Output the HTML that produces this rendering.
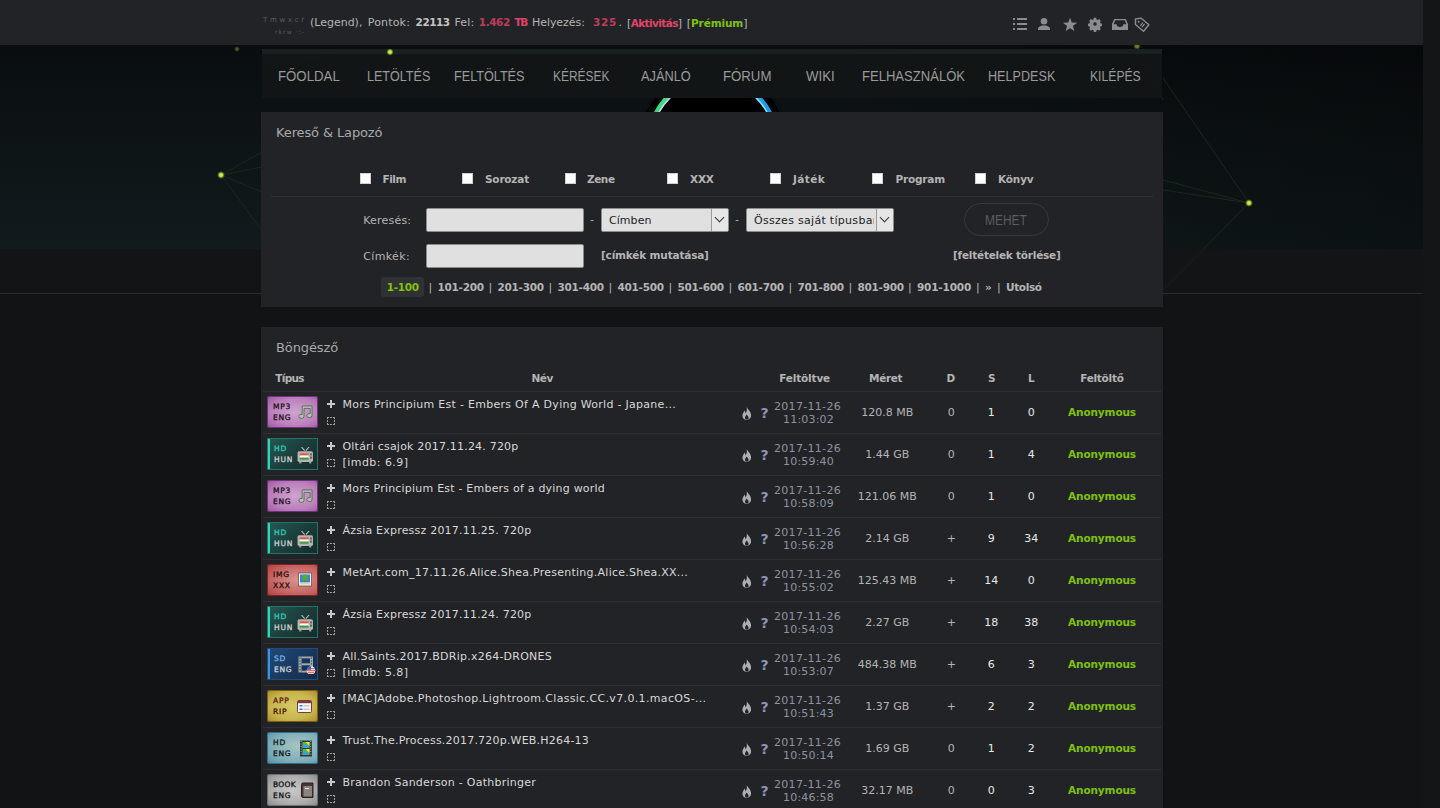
<!DOCTYPE html>
<html lang="hu">
<head>
<meta charset="utf-8">
<title>Böngésző</title>
<style>
*{box-sizing:border-box;margin:0;padding:0}
html,body{width:1440px;height:808px;overflow:hidden;background:#121315;}
body{position:relative;font-family:"DejaVu Sans","Liberation Sans",sans-serif;font-size:11px;color:#b4b4b4;}
.t{position:absolute;white-space:nowrap;display:block}
#scroll{position:absolute;left:1423px;top:0;width:17px;height:808px;background:#141516;z-index:50}
#topbar{position:absolute;left:0;top:0;width:1423px;height:45px;background:#222326}
#hero{position:absolute;left:0;top:45px;width:1423px;height:204px;background:linear-gradient(90deg,rgba(0,0,0,0) 55%,rgba(0,0,0,.32) 100%),linear-gradient(180deg,#090d0f 0%,#0d1315 40%,#111a1d 100%);overflow:hidden}
#strip{position:absolute;left:0;top:249px;width:1423px;height:45px;background:#121415;border-bottom:1px solid #292b2d}
#menu{position:absolute;left:262px;top:49px;width:900px;height:49px;background:rgba(19,22,23,.95);border-top:5px solid rgba(25,33,34,.95)}
.m{font-family:"Liberation Sans",sans-serif;font-size:14px;color:#9a9a9a}
.panel{position:absolute;left:261px;width:902px;background:#222326}
.pt{font-size:13px;color:#a9a9a9}
b,.b{font-weight:bold;font-size:10.5px}
.pk{color:#e2436b}.gr{color:#7fc20b}
.w{color:#e8e8e8}
.hl{position:absolute;height:1px;background:#2f3033}
.cb{position:absolute;width:11px;height:11px;background:#fff;border:1px solid #cfcfcf}
.in{position:absolute;height:24px;background:#e0e0e0;border:1px solid #8b8b8b;border-radius:2px}
.sel{position:absolute;height:24px;background:#e0e0e0;border:1px solid #8b8b8b;border-radius:2px;color:#222;overflow:hidden}
.sel i{position:absolute;right:0;top:0;width:17px;height:22px;border-left:1px solid #9a9a9a;background:#e6e6e6}
.sel i:after{content:"";position:absolute;left:4px;top:5px;width:6px;height:6px;border-right:1.3px solid #333;border-bottom:1.3px solid #333;transform:rotate(45deg)}
.btn{position:absolute;left:964px;top:203px;width:85px;height:33px;border:1px solid #38393c;border-radius:17px}
.ti{position:absolute;left:267px;width:51px;height:32px;overflow:hidden;border-radius:3px;font-family:"DejaVu Sans",sans-serif;font-weight:normal;font-size:7.500px;-webkit-text-stroke:.28px currentColor}
.ti span{position:absolute;left:6px;line-height:7px;letter-spacing:.75px;white-space:nowrap}
.ti .l1{top:7px}.ti .l2{top:18px}
.ti svg{position:absolute;left:30px;top:8px}
.ti.sq{border-radius:0}
.ti.sq span{left:7px}
.plus{position:absolute;left:327px;width:8px;height:8px}
.plus:before{content:"";position:absolute;left:0;top:3px;width:8px;height:2px;background:#c8c8c8}
.plus:after{content:"";position:absolute;left:3px;top:0;width:2px;height:8px;background:#c8c8c8}
.dsq{position:absolute;left:327px;width:8px;height:8px}
.nm{font-size:11px;color:#d8d8d8}
.q{font-weight:bold;color:#8c96b8;font-size:14px}
.dt{color:#a9afbd;font-size:11px;opacity:.8}
</style>
</head>
<body>
<div id="hero">
<svg width="1423" height="204" viewBox="0 45 1423 204" style="position:absolute;left:0;top:0">
<defs>
<radialGradient id="gd"><stop offset="0" stop-color="#d8f56a"/><stop offset=".45" stop-color="#b4dc3c"/><stop offset="1" stop-color="#5a7a1a" stop-opacity="0"/></radialGradient>
<linearGradient id="rim" x1="0" x2="1" y1="0" y2="0"><stop offset="0" stop-color="#2fd873"/><stop offset=".25" stop-color="#45e88a"/><stop offset=".5" stop-color="#0c2a2a"/><stop offset=".75" stop-color="#27b4ea"/><stop offset="1" stop-color="#1f8fe0"/></linearGradient>
<linearGradient id="rim2" x1="0" x2="1" y1="0" y2="0"><stop offset="0" stop-color="#d8c8ff"/><stop offset=".3" stop-color="#c8d8ff"/><stop offset=".5" stop-color="#0c2a2a"/><stop offset=".7" stop-color="#7fe0ff"/><stop offset="1" stop-color="#7fe0ff"/></linearGradient>
<clipPath id="cband"><rect x="600" y="98" width="230" height="14"/></clipPath>
</defs>
<g stroke="#1c2a1a" stroke-width="1" fill="none" opacity=".9">
<path d="M221 175L262 152M221 175L262 167M221 175L262 192M221 175L262 231"/>
<path d="M1249 203L1163 78M1249 203L1163 180M1249 203L1163 190M1249 203L1163 290"/>
<path d="M390 52L262 60M1137 46L1163 100"/>
</g>
<circle cx="221" cy="175" r="4" fill="url(#gd)"/>
<circle cx="1249" cy="203" r="4" fill="url(#gd)"/>
<circle cx="237" cy="49" r="3" fill="url(#gd)" opacity=".35"/>
<circle cx="1137" cy="46" r="4" fill="url(#gd)" opacity=".5"/>
<g clip-path="url(#cband)">
<circle cx="713" cy="143" r="76" fill="#071012" opacity=".7"/>
<circle cx="713" cy="143" r="73.300" fill="#000"/>
<circle cx="713" cy="141" r="63" fill="none" stroke="url(#rim)" stroke-width="5"/>
<circle cx="713" cy="141" r="61" fill="none" stroke="url(#rim2)" stroke-width="1.500"/>
</g>
</svg>
</div>
<div id="strip"><svg width="1423" height="44" viewBox="0 249 1423 44" style="position:absolute;left:0;top:0"><path d="M1203.500 249L1163 290" stroke="#1c2a1a" stroke-width="1" opacity=".5"/></svg></div>
<div id="topbar"></div>

<span id="t1" class="t dt" style="top:15px;line-height:10px;left:263px;letter-spacing:2.737px;font-size:7px;color:#8a8f9a;opacity:.55">Tmwxcr</span>
<span id="t2" class="t dt" style="top:27px;line-height:10px;left:275px;letter-spacing:1.084px;font-size:6px;color:#8a8f9a;opacity:.5">rkrw ·:-</span>
<span id="t3" class="t " style="top:15.5px;line-height:14px;left:310px;letter-spacing:-0.011px;">(Legend),</span>
<span id="t4" class="t " style="top:15.5px;line-height:14px;left:367.8px;letter-spacing:0.163px;">Pontok:</span>
<span id="t5" class="t " style="top:14.8px;line-height:14px;left:415.6px;letter-spacing:-0.506px;color:#c4c4c4"><b>22113</b></span>
<span id="t6" class="t " style="top:15.5px;line-height:14px;left:454.5px;letter-spacing:0.134px;">Fel:</span>
<span id="t7" class="t pk" style="top:14.8px;line-height:14px;left:478.8px;letter-spacing:-0.444px;font-size:10px;opacity:.8"><b>1.462</b></span>
<span id="t8" class="t pk" style="top:14.8px;line-height:14px;left:514.4px;letter-spacing:-1.286px;"><b>TB</b></span>
<span id="t9" class="t " style="top:15.5px;line-height:14px;left:532px;letter-spacing:-0.062px;">Helyezés:</span>
<span id="t10" class="t pk" style="top:14.8px;line-height:14px;left:593px;letter-spacing:0.693px;font-size:10px;opacity:.8"><b>325</b></span>
<span id="t11" class="t " style="top:15.5px;line-height:14px;left:618.5px;">.</span>
<span id="t12" class="t " style="top:15.5px;line-height:14px;left:627px;letter-spacing:-0.602px;">[<b class="pk">Aktivitás</b>]</span>
<span id="t13" class="t " style="top:15.5px;line-height:14px;left:686.8px;letter-spacing:-0.116px;">[<b class="gr">Prémium</b>]</span>
<svg style="position:absolute;left:1008px;top:14px" width="146" height="22" viewBox="1008 14 146 22" fill="#8c8c8e">
<g><rect x="1013" y="18" width="2" height="2"/><rect x="1017" y="18" width="10" height="2"/><rect x="1013" y="23" width="2" height="2"/><rect x="1017" y="23" width="10" height="2"/><rect x="1013" y="28" width="2" height="2"/><rect x="1017" y="28" width="10" height="2"/></g>
<g><circle cx="1044" cy="21.3" r="3.3"/><path d="M1038 30v-1.2c0-1.6 2.2-2.6 4.2-3.2h3.6c2 .6 4.200 1.600 4.200 3.200v1.200z"/></g>
<path d="M1070.00 17.70L1071.82 22.59L1077.04 22.81L1072.95 26.06L1074.35 31.09L1070.00 28.20L1065.65 31.09L1067.05 26.06L1062.96 22.81L1068.18 22.59z"/>
<g transform="translate(1095 24) scale(.88)"><path d="M-1.300-7h2.600l.5 1.800 1.300.55 1.650-.9 1.800 1.800-.9 1.650.55 1.300 1.800.5v2.600l-1.800.5-.55 1.300.9 1.650-1.800 1.800-1.650-.9-1.300.55-.5 1.800h-2.600l-.5-1.800-1.300-.55-1.650.9-1.800-1.800.9-1.650-.55-1.300-1.800-.5v-2.600l1.800-.5.55-1.300-.9-1.650 1.800-1.800 1.650.9 1.300-.55z"/><circle r="2" fill="#222326"/></g>
<path d="M1114.200 19h11.600l2.200 5v6h-16v-6zM1115.300 20.300l-1.700 4h3.100c0 1.700 1.400 2.700 3.300 2.700s3.300-1 3.300-2.700h3.100l-1.700-4z" fill-rule="evenodd"/>
<g transform="translate(1142 24.500) rotate(40)"><path d="M-8.500 0l3.500-4.200h10.500v8.400h-10.500z" fill="none" stroke="#8c8c8e" stroke-width="1.400" stroke-linejoin="round"/><circle cx="-4.300" cy="0" r="1"/><rect x="-1" y="-2" width="1.200" height="4"/><rect x="1" y="-2" width="1.200" height="4"/></g>
</svg>
<div id="menu"></div>
<svg style="position:absolute;left:380px;top:44px" width="20" height="16" viewBox="380 44 20 16"><circle cx="390" cy="52" r="3.800" fill="url(#gd)"/></svg>
<span id="t14" class="t m" style="top:67px;line-height:18px;left:278.25px;transform-origin:0 50%;transform:scaleX(0.9448);">FŐOLDAL</span>
<span id="t15" class="t m" style="top:67px;line-height:18px;left:366.7px;transform-origin:0 50%;transform:scaleX(0.8973);">LETÖLTÉS</span>
<span id="t16" class="t m" style="top:67px;line-height:18px;left:454px;transform-origin:0 50%;transform:scaleX(0.9031);">FELTÖLTÉS</span>
<span id="t17" class="t m" style="top:67px;line-height:18px;left:552.6px;transform-origin:0 50%;transform:scaleX(0.8527);">KÉRÉSEK</span>
<span id="t18" class="t m" style="top:67px;line-height:18px;left:641px;transform-origin:0 50%;transform:scaleX(0.9134);">AJÁNLÓ</span>
<span id="t19" class="t m" style="top:67px;line-height:18px;left:723px;transform-origin:0 50%;transform:scaleX(0.9430);">FÓRUM</span>
<span id="t20" class="t m" style="top:67px;line-height:18px;left:805.75px;transform-origin:0 50%;transform:scaleX(0.9475);">WIKI</span>
<span id="t21" class="t m" style="top:67px;line-height:18px;left:862px;transform-origin:0 50%;transform:scaleX(0.9323);">FELHASZNÁLÓK</span>
<span id="t22" class="t m" style="top:67px;line-height:18px;left:987.6px;transform-origin:0 50%;transform:scaleX(0.9022);">HELPDESK</span>
<span id="t23" class="t m" style="top:67px;line-height:18px;left:1090px;transform-origin:0 50%;transform:scaleX(0.8694);">KILÉPÉS</span>
<div class="panel" style="top:112px;height:195px"></div>
<span id="t24" class="t pt" style="top:123.5px;line-height:18px;left:276px;letter-spacing:-0.124px;">Kereső &amp; Lapozó</span>
<div class="cb" style="left:360px;top:173px"></div>
<span id="t25" class="t " style="top:171.8px;line-height:14px;left:382.5px;letter-spacing:-0.453px;"><b>Film</b></span>
<div class="cb" style="left:462px;top:173px"></div>
<span id="t26" class="t " style="top:171.8px;line-height:14px;left:485px;letter-spacing:-0.199px;"><b>Sorozat</b></span>
<div class="cb" style="left:565px;top:173px"></div>
<span id="t27" class="t " style="top:171.8px;line-height:14px;left:587px;letter-spacing:-0.436px;"><b>Zene</b></span>
<div class="cb" style="left:667px;top:173px"></div>
<span id="t28" class="t " style="top:171.8px;line-height:14px;left:690px;letter-spacing:-0.182px;"><b>XXX</b></span>
<div class="cb" style="left:770px;top:173px"></div>
<span id="t29" class="t " style="top:171.8px;line-height:14px;left:793px;letter-spacing:0.375px;"><b>Játék</b></span>
<div class="cb" style="left:872px;top:173px"></div>
<span id="t30" class="t " style="top:171.8px;line-height:14px;left:895.5px;letter-spacing:-0.188px;"><b>Program</b></span>
<div class="cb" style="left:975px;top:173px"></div>
<span id="t31" class="t " style="top:171.8px;line-height:14px;left:998px;letter-spacing:-0.169px;"><b>Könyv</b></span>
<div class="hl" style="left:271px;top:196px;width:882px"></div>
<span id="t32" class="t " style="top:213.5px;line-height:14px;left:363.25px;letter-spacing:0.197px;">Keresés:</span>
<span id="t33" class="t " style="top:249.5px;line-height:14px;left:363.25px;letter-spacing:0.353px;">Címkék:</span>
<div class="in" style="left:426px;top:208px;width:158px"></div>
<div class="in" style="left:426px;top:244px;width:158px"></div>
<span id="t34" class="t " style="top:212.5px;line-height:14px;left:590px;">-</span>
<div class="sel" style="left:601px;top:208px;width:128px"><i></i></div>
<span id="t35" class="t " style="top:214.3px;line-height:14px;left:609px;letter-spacing:0.052px;color:#222">Címben</span>
<span id="t36" class="t " style="top:212.5px;line-height:14px;left:735px;">-</span>
<div class="sel" style="left:746px;top:208px;width:148px"><i></i></div>
<div style="position:absolute;left:754px;top:214px;width:120px;height:14px;overflow:hidden"><span id="t37" class="t " style="top:0px;line-height:14px;left:0px;letter-spacing:0.299px;color:#222">Összes saját típusban</span></div>
<div class="btn"></div>
<span id="t38" class="t " style="top:210.5px;line-height:18px;left:984.6px;transform-origin:0 50%;transform:scaleX(0.8531);font-family:'Liberation Sans',sans-serif;font-size:14px;color:#5b5c60">MEHET</span>
<span id="t39" class="t " style="top:248.1px;line-height:14px;left:601px;letter-spacing:-0.179px;"><b>[címkék mutatása]</b></span>
<span id="t40" class="t " style="top:248.1px;line-height:14px;left:953px;letter-spacing:-0.222px;"><b>[feltételek törlése]</b></span>
<div style="position:absolute;left:381px;top:277px;width:43px;height:20px;background:#303134;border-radius:3px"></div>
<span id="t41" class="t gr" style="top:279.8px;line-height:14px;left:386.75px;letter-spacing:-0.319px;"><b>1-100</b></span>
<span id="t42" class="t " style="top:280.5px;line-height:14px;left:428.5px;">|</span>
<span id="t43" class="t " style="top:279.8px;line-height:14px;left:437.5px;letter-spacing:-0.279px;"><b>101-200</b></span>
<span id="t44" class="t " style="top:280.5px;line-height:14px;left:488.5px;">|</span>
<span id="t45" class="t " style="top:279.8px;line-height:14px;left:497.5px;letter-spacing:-0.279px;"><b>201-300</b></span>
<span id="t46" class="t " style="top:280.5px;line-height:14px;left:548.5px;">|</span>
<span id="t47" class="t " style="top:279.8px;line-height:14px;left:557.5px;letter-spacing:-0.279px;"><b>301-400</b></span>
<span id="t48" class="t " style="top:280.5px;line-height:14px;left:608.5px;">|</span>
<span id="t49" class="t " style="top:279.8px;line-height:14px;left:617.5px;letter-spacing:-0.279px;"><b>401-500</b></span>
<span id="t50" class="t " style="top:280.5px;line-height:14px;left:668.5px;">|</span>
<span id="t51" class="t " style="top:279.8px;line-height:14px;left:677.5px;letter-spacing:-0.279px;"><b>501-600</b></span>
<span id="t52" class="t " style="top:280.5px;line-height:14px;left:728.5px;">|</span>
<span id="t53" class="t " style="top:279.8px;line-height:14px;left:737.5px;letter-spacing:-0.279px;"><b>601-700</b></span>
<span id="t54" class="t " style="top:280.5px;line-height:14px;left:788.5px;">|</span>
<span id="t55" class="t " style="top:279.8px;line-height:14px;left:797.5px;letter-spacing:-0.279px;"><b>701-800</b></span>
<span id="t56" class="t " style="top:280.5px;line-height:14px;left:848.5px;">|</span>
<span id="t57" class="t " style="top:279.8px;line-height:14px;left:857.5px;letter-spacing:-0.279px;"><b>801-900</b></span>
<span id="t58" class="t " style="top:280.5px;line-height:14px;left:908px;">|</span>
<span id="t59" class="t " style="top:279.8px;line-height:14px;left:917px;letter-spacing:-0.188px;"><b>901-1000</b></span>
<span id="t60" class="t " style="top:280.5px;line-height:14px;left:976px;">|</span>
<span id="t61" class="t " style="top:279.8px;line-height:14px;left:985px;letter-spacing:0.203px;"><b>»</b></span>
<span id="t62" class="t " style="top:280.5px;line-height:14px;left:997px;">|</span>
<span id="t63" class="t " style="top:279.8px;line-height:14px;left:1006px;letter-spacing:-0.355px;"><b>Utolsó</b></span>
<div class="panel" style="top:327px;height:481px"></div>
<span id="t64" class="t pt" style="top:338.5px;line-height:18px;left:276px;letter-spacing:-0.115px;">Böngésző</span>
<span id="t65" class="t " style="top:370.8px;line-height:14px;left:275.3px;letter-spacing:-0.703px;"><b>Típus</b></span>
<span id="t66" class="t " style="top:370.8px;line-height:14px;left:531.5px;letter-spacing:-0.422px;"><b>Név</b></span>
<span id="t67" class="t " style="top:370.8px;line-height:14px;left:779.3px;letter-spacing:-0.177px;"><b>Feltöltve</b></span>
<span id="t68" class="t " style="top:370.8px;line-height:14px;left:869px;letter-spacing:-0.318px;"><b>Méret</b></span>
<span id="t69" class="t " style="top:370.8px;line-height:14px;left:946.4px;"><b>D</b></span>
<span id="t70" class="t " style="top:370.8px;line-height:14px;left:987.9px;"><b>S</b></span>
<span id="t71" class="t " style="top:370.8px;line-height:14px;left:1028px;"><b>L</b></span>
<span id="t72" class="t " style="top:370.8px;line-height:14px;left:1080.2px;letter-spacing:-0.268px;"><b>Feltöltő</b></span>
<div class="hl" style="left:263px;top:391px;width:898px"></div>
<div class="ti " style="top:396px;background:radial-gradient(ellipse at 55% 50%,#cfa3cf 0%,#ba80bb 60%,#9c54a3 100%);box-shadow:inset 0 0 0 1px #74307e"><span class="l1" style="color:#1b0d1c">MP3</span><span class="l2" style="color:#1b0d1c">ENG</span><svg style="left:29.500px;top:8.500px" width="16" height="15" viewBox="0 0 16 15"><path d="M5.200 1h9.800v9.600a2.600 2 0 1 1-1.800-1.900v-5.300h-6.200v8a2.600 2 0 1 1-1.800-1.900z" fill="#b4c8b0" stroke="#4f5c50" stroke-width=".8"/></svg></div>
<div class="plus" style="top:400px"></div>
<svg class="dsq" style="top:417px" width="8" height="8" viewBox="0 0 8 8" fill="#a29f94"><path d="M0 0h2v1h-1v1h-1zM3 0h2v1h-2zM6 0h2v2h-1v-1h-1zM0 3h1v2h-1zM7 3h1v2h-1zM0 6h1v1h1v1h-2zM3 7h2v1h-2zM6 7h1v-1h1v2h-2z"/></svg>
<span id="t73" class="t nm" style="top:397.4px;line-height:16px;left:342.5px;letter-spacing:0.283px;">Mors Principium Est - Embers Of A Dying World - Japane...</span>
<svg style="position:absolute;left:742px;top:406.8px" width="10" height="13" viewBox="0 0 10 13"><path d="M4.600 0c.8 2.200 3.900 3.800 4.400 7.400.4 2.800-1.300 5.200-4.200 5.400C2 12.900.2 10.900.4 8.300.6 6.400 2 5.400 2.300 3.600c.9.900 1.200 1.900 1.100 3C4.700 5.200 5.200 2.300 4.600 0z" fill="#aeaeb1"/><path d="M4.800 12.600c-1.300-.1-2-1.100-1.800-2.300.2-1.100 1.200-1.600 1.500-2.900.9 1.100 2.200 2 2.100 3.500-.1 1-.8 1.700-1.800 1.700z" fill="#222326"/></svg>
<span id="t74" class="t q" style="top:404.8px;line-height:16px;left:760.6px;letter-spacing:-1.325px;">?</span>
<span id="t75" class="t dt" style="top:400.3px;line-height:14px;left:774px;letter-spacing:0.306px;">2017-11-26</span>
<span id="t76" class="t dt" style="top:413px;line-height:14px;left:783px;letter-spacing:0.199px;">11:03:02</span>
<span id="t77" class="t " style="top:405.5px;line-height:14px;left:887.3px;transform:translateX(-50%);">120.8 MB</span>
<span id="t78" class="t " style="top:405.5px;line-height:14px;left:951.3px;transform:translateX(-50%);">0</span>
<span id="t79" class="t w" style="top:405.5px;line-height:14px;left:991.3px;transform:translateX(-50%);">1</span>
<span id="t80" class="t w" style="top:405.5px;line-height:14px;left:1031.3px;transform:translateX(-50%);">0</span>
<span id="t81" class="t gr" style="top:404.8px;line-height:14px;left:1068px;letter-spacing:-0.113px;"><b>Anonymous</b></span>
<div class="hl" style="left:263px;top:433px;width:898px"></div>
<div class="ti sq" style="top:438px;background:linear-gradient(90deg,#2fd6bb 0,#2fd6bb 2.500px,transparent 2.500px),linear-gradient(135deg,#245a55 0%,#1c3f3d 50%,#182a2b 100%);box-shadow:inset 0 0 0 1px #217565"><span class="l1" style="color:#35cdb8">HD</span><span class="l2" style="color:#cfd6d4">HUN</span><svg style="top:8.500px" width="16.500" height="17" viewBox="0 0 15 16" preserveAspectRatio="none"><path d="M4 0l3 3.500M11 0l-3 3.500" stroke="#b8b8b8" stroke-width="1" fill="none"/><rect x=".5" y="4" width="14" height="10" rx="1.500" fill="#b4b4b4"/><rect x="2.500" y="6" width="8" height="2" fill="#e8543c"/><rect x="2.500" y="8" width="8" height="2" fill="#fff"/><rect x="2.500" y="10" width="8" height="2" fill="#3f9a4a"/><rect x="12" y="6" width="1.500" height="2" fill="#555"/><rect x="12" y="9" width="1.500" height="2" fill="#555"/><rect x="2" y="14" width="2" height="1.500" fill="#9a9a9a"/><rect x="11" y="14" width="2" height="1.500" fill="#9a9a9a"/></svg></div>
<div class="plus" style="top:442px"></div>
<svg class="dsq" style="top:459px" width="8" height="8" viewBox="0 0 8 8" fill="#a29f94"><path d="M0 0h2v1h-1v1h-1zM3 0h2v1h-2zM6 0h2v2h-1v-1h-1zM0 3h1v2h-1zM7 3h1v2h-1zM0 6h1v1h1v1h-2zM3 7h2v1h-2zM6 7h1v-1h1v2h-2z"/></svg>
<span id="t82" class="t nm" style="top:439.4px;line-height:16px;left:342.5px;letter-spacing:0.201px;">Oltári csajok 2017.11.24. 720p</span>
<span id="t83" class="t nm" style="top:455px;line-height:16px;left:342.5px;letter-spacing:0.453px;">[imdb: 6.9]</span>
<svg style="position:absolute;left:742px;top:448.8px" width="10" height="13" viewBox="0 0 10 13"><path d="M4.600 0c.8 2.200 3.900 3.800 4.400 7.400.4 2.800-1.300 5.200-4.200 5.400C2 12.900.2 10.900.4 8.300.6 6.400 2 5.400 2.300 3.600c.9.900 1.200 1.900 1.100 3C4.700 5.200 5.200 2.300 4.600 0z" fill="#aeaeb1"/><path d="M4.800 12.600c-1.300-.1-2-1.100-1.800-2.300.2-1.100 1.200-1.600 1.500-2.900.9 1.100 2.200 2 2.100 3.500-.1 1-.8 1.700-1.800 1.700z" fill="#222326"/></svg>
<span id="t84" class="t q" style="top:446.8px;line-height:16px;left:760.6px;letter-spacing:-1.325px;">?</span>
<span id="t85" class="t dt" style="top:442.3px;line-height:14px;left:774px;letter-spacing:0.306px;">2017-11-26</span>
<span id="t86" class="t dt" style="top:455px;line-height:14px;left:783px;letter-spacing:0.199px;">10:59:40</span>
<span id="t87" class="t " style="top:447.5px;line-height:14px;left:887.3px;transform:translateX(-50%);">1.44 GB</span>
<span id="t88" class="t " style="top:447.5px;line-height:14px;left:951.3px;transform:translateX(-50%);">0</span>
<span id="t89" class="t w" style="top:447.5px;line-height:14px;left:991.3px;transform:translateX(-50%);">1</span>
<span id="t90" class="t w" style="top:447.5px;line-height:14px;left:1031.3px;transform:translateX(-50%);">4</span>
<span id="t91" class="t gr" style="top:446.8px;line-height:14px;left:1068px;letter-spacing:-0.113px;"><b>Anonymous</b></span>
<div class="hl" style="left:263px;top:475px;width:898px"></div>
<div class="ti " style="top:480px;background:radial-gradient(ellipse at 55% 50%,#cfa3cf 0%,#ba80bb 60%,#9c54a3 100%);box-shadow:inset 0 0 0 1px #74307e"><span class="l1" style="color:#1b0d1c">MP3</span><span class="l2" style="color:#1b0d1c">ENG</span><svg style="left:29.500px;top:8.500px" width="16" height="15" viewBox="0 0 16 15"><path d="M5.200 1h9.800v9.600a2.600 2 0 1 1-1.800-1.900v-5.300h-6.200v8a2.600 2 0 1 1-1.800-1.900z" fill="#b4c8b0" stroke="#4f5c50" stroke-width=".8"/></svg></div>
<div class="plus" style="top:484px"></div>
<svg class="dsq" style="top:501px" width="8" height="8" viewBox="0 0 8 8" fill="#a29f94"><path d="M0 0h2v1h-1v1h-1zM3 0h2v1h-2zM6 0h2v2h-1v-1h-1zM0 3h1v2h-1zM7 3h1v2h-1zM0 6h1v1h1v1h-2zM3 7h2v1h-2zM6 7h1v-1h1v2h-2z"/></svg>
<span id="t92" class="t nm" style="top:481.4px;line-height:16px;left:342.5px;letter-spacing:0.210px;">Mors Principium Est - Embers of a dying world</span>
<svg style="position:absolute;left:742px;top:490.8px" width="10" height="13" viewBox="0 0 10 13"><path d="M4.600 0c.8 2.200 3.900 3.800 4.400 7.400.4 2.800-1.300 5.200-4.200 5.400C2 12.900.2 10.900.4 8.300.6 6.400 2 5.400 2.300 3.600c.9.900 1.200 1.900 1.100 3C4.700 5.200 5.200 2.300 4.600 0z" fill="#aeaeb1"/><path d="M4.800 12.600c-1.300-.1-2-1.100-1.800-2.300.2-1.100 1.200-1.600 1.500-2.900.9 1.100 2.200 2 2.100 3.500-.1 1-.8 1.700-1.800 1.700z" fill="#222326"/></svg>
<span id="t93" class="t q" style="top:488.8px;line-height:16px;left:760.6px;letter-spacing:-1.325px;">?</span>
<span id="t94" class="t dt" style="top:484.3px;line-height:14px;left:774px;letter-spacing:0.306px;">2017-11-26</span>
<span id="t95" class="t dt" style="top:497px;line-height:14px;left:783px;letter-spacing:0.199px;">10:58:09</span>
<span id="t96" class="t " style="top:489.5px;line-height:14px;left:887.3px;transform:translateX(-50%);">121.06 MB</span>
<span id="t97" class="t " style="top:489.5px;line-height:14px;left:951.3px;transform:translateX(-50%);">0</span>
<span id="t98" class="t w" style="top:489.5px;line-height:14px;left:991.3px;transform:translateX(-50%);">1</span>
<span id="t99" class="t w" style="top:489.5px;line-height:14px;left:1031.3px;transform:translateX(-50%);">0</span>
<span id="t100" class="t gr" style="top:488.8px;line-height:14px;left:1068px;letter-spacing:-0.113px;"><b>Anonymous</b></span>
<div class="hl" style="left:263px;top:517px;width:898px"></div>
<div class="ti sq" style="top:522px;background:linear-gradient(90deg,#2fd6bb 0,#2fd6bb 2.500px,transparent 2.500px),linear-gradient(135deg,#245a55 0%,#1c3f3d 50%,#182a2b 100%);box-shadow:inset 0 0 0 1px #217565"><span class="l1" style="color:#35cdb8">HD</span><span class="l2" style="color:#cfd6d4">HUN</span><svg style="top:8.500px" width="16.500" height="17" viewBox="0 0 15 16" preserveAspectRatio="none"><path d="M4 0l3 3.500M11 0l-3 3.500" stroke="#b8b8b8" stroke-width="1" fill="none"/><rect x=".5" y="4" width="14" height="10" rx="1.500" fill="#b4b4b4"/><rect x="2.500" y="6" width="8" height="2" fill="#e8543c"/><rect x="2.500" y="8" width="8" height="2" fill="#fff"/><rect x="2.500" y="10" width="8" height="2" fill="#3f9a4a"/><rect x="12" y="6" width="1.500" height="2" fill="#555"/><rect x="12" y="9" width="1.500" height="2" fill="#555"/><rect x="2" y="14" width="2" height="1.500" fill="#9a9a9a"/><rect x="11" y="14" width="2" height="1.500" fill="#9a9a9a"/></svg></div>
<div class="plus" style="top:526px"></div>
<svg class="dsq" style="top:543px" width="8" height="8" viewBox="0 0 8 8" fill="#a29f94"><path d="M0 0h2v1h-1v1h-1zM3 0h2v1h-2zM6 0h2v2h-1v-1h-1zM0 3h1v2h-1zM7 3h1v2h-1zM0 6h1v1h1v1h-2zM3 7h2v1h-2zM6 7h1v-1h1v2h-2z"/></svg>
<span id="t101" class="t nm" style="top:523.4px;line-height:16px;left:342.5px;letter-spacing:0.210px;">Ázsia Expressz 2017.11.25. 720p</span>
<svg style="position:absolute;left:742px;top:532.8px" width="10" height="13" viewBox="0 0 10 13"><path d="M4.600 0c.8 2.200 3.900 3.800 4.400 7.400.4 2.800-1.300 5.200-4.200 5.400C2 12.900.2 10.900.4 8.300.6 6.400 2 5.400 2.300 3.600c.9.900 1.200 1.900 1.100 3C4.700 5.200 5.200 2.300 4.600 0z" fill="#aeaeb1"/><path d="M4.800 12.600c-1.300-.1-2-1.100-1.800-2.300.2-1.100 1.200-1.600 1.500-2.900.9 1.100 2.200 2 2.100 3.500-.1 1-.8 1.700-1.800 1.700z" fill="#222326"/></svg>
<span id="t102" class="t q" style="top:530.8px;line-height:16px;left:760.6px;letter-spacing:-1.325px;">?</span>
<span id="t103" class="t dt" style="top:526.3px;line-height:14px;left:774px;letter-spacing:0.306px;">2017-11-26</span>
<span id="t104" class="t dt" style="top:539px;line-height:14px;left:783px;letter-spacing:0.199px;">10:56:28</span>
<span id="t105" class="t " style="top:531.5px;line-height:14px;left:887.3px;transform:translateX(-50%);">2.14 GB</span>
<span id="t106" class="t " style="top:531.5px;line-height:14px;left:951.3px;transform:translateX(-50%);">+</span>
<span id="t107" class="t w" style="top:531.5px;line-height:14px;left:991.3px;transform:translateX(-50%);">9</span>
<span id="t108" class="t w" style="top:531.5px;line-height:14px;left:1031.3px;transform:translateX(-50%);">34</span>
<span id="t109" class="t gr" style="top:530.8px;line-height:14px;left:1068px;letter-spacing:-0.113px;"><b>Anonymous</b></span>
<div class="hl" style="left:263px;top:559px;width:898px"></div>
<div class="ti " style="top:564px;background:radial-gradient(ellipse at 60% 50%,#d99591 0%,#c46663 60%,#ac3e3c 100%);box-shadow:inset 0 0 0 1px #861f1f"><span class="l1" style="color:#2a0909">IMG</span><span class="l2" style="color:#2a0909">XXX</span><svg style="left:31px" width="15" height="16" viewBox="0 0 15 16"><rect x=".5" y="1" width="13" height="13" fill="#f4f4f4" stroke="#7a4a4a" stroke-width=".8"/><rect x="2" y="2.500" width="10" height="8" fill="#3f7fe0"/><circle cx="7" cy="5.500" r="3" fill="#4caf3a"/><rect x="6.300" y="8" width="1.500" height="2.500" fill="#a8642a"/><rect x="2" y="10.500" width="10" height="2" fill="#b9e2a0"/></svg></div>
<div class="plus" style="top:568px"></div>
<svg class="dsq" style="top:585px" width="8" height="8" viewBox="0 0 8 8" fill="#a29f94"><path d="M0 0h2v1h-1v1h-1zM3 0h2v1h-2zM6 0h2v2h-1v-1h-1zM0 3h1v2h-1zM7 3h1v2h-1zM0 6h1v1h1v1h-2zM3 7h2v1h-2zM6 7h1v-1h1v2h-2z"/></svg>
<span id="t110" class="t nm" style="top:565.4px;line-height:16px;left:342.5px;letter-spacing:0.249px;">MetArt.com_17.11.26.Alice.Shea.Presenting.Alice.Shea.XX...</span>
<svg style="position:absolute;left:742px;top:574.8px" width="10" height="13" viewBox="0 0 10 13"><path d="M4.600 0c.8 2.200 3.900 3.800 4.400 7.400.4 2.800-1.300 5.200-4.200 5.400C2 12.900.2 10.900.4 8.300.6 6.400 2 5.400 2.300 3.600c.9.900 1.200 1.900 1.100 3C4.700 5.200 5.200 2.300 4.600 0z" fill="#aeaeb1"/><path d="M4.800 12.600c-1.300-.1-2-1.100-1.800-2.300.2-1.100 1.200-1.600 1.500-2.900.9 1.100 2.200 2 2.100 3.500-.1 1-.8 1.700-1.800 1.700z" fill="#222326"/></svg>
<span id="t111" class="t q" style="top:572.8px;line-height:16px;left:760.6px;letter-spacing:-1.325px;">?</span>
<span id="t112" class="t dt" style="top:568.3px;line-height:14px;left:774px;letter-spacing:0.306px;">2017-11-26</span>
<span id="t113" class="t dt" style="top:581px;line-height:14px;left:783px;letter-spacing:0.199px;">10:55:02</span>
<span id="t114" class="t " style="top:573.5px;line-height:14px;left:887.3px;transform:translateX(-50%);">125.43 MB</span>
<span id="t115" class="t " style="top:573.5px;line-height:14px;left:951.3px;transform:translateX(-50%);">+</span>
<span id="t116" class="t w" style="top:573.5px;line-height:14px;left:991.3px;transform:translateX(-50%);">14</span>
<span id="t117" class="t w" style="top:573.5px;line-height:14px;left:1031.3px;transform:translateX(-50%);">0</span>
<span id="t118" class="t gr" style="top:572.8px;line-height:14px;left:1068px;letter-spacing:-0.113px;"><b>Anonymous</b></span>
<div class="hl" style="left:263px;top:601px;width:898px"></div>
<div class="ti sq" style="top:606px;background:linear-gradient(90deg,#2fd6bb 0,#2fd6bb 2.500px,transparent 2.500px),linear-gradient(135deg,#245a55 0%,#1c3f3d 50%,#182a2b 100%);box-shadow:inset 0 0 0 1px #217565"><span class="l1" style="color:#35cdb8">HD</span><span class="l2" style="color:#cfd6d4">HUN</span><svg style="top:8.500px" width="16.500" height="17" viewBox="0 0 15 16" preserveAspectRatio="none"><path d="M4 0l3 3.500M11 0l-3 3.500" stroke="#b8b8b8" stroke-width="1" fill="none"/><rect x=".5" y="4" width="14" height="10" rx="1.500" fill="#b4b4b4"/><rect x="2.500" y="6" width="8" height="2" fill="#e8543c"/><rect x="2.500" y="8" width="8" height="2" fill="#fff"/><rect x="2.500" y="10" width="8" height="2" fill="#3f9a4a"/><rect x="12" y="6" width="1.500" height="2" fill="#555"/><rect x="12" y="9" width="1.500" height="2" fill="#555"/><rect x="2" y="14" width="2" height="1.500" fill="#9a9a9a"/><rect x="11" y="14" width="2" height="1.500" fill="#9a9a9a"/></svg></div>
<div class="plus" style="top:610px"></div>
<svg class="dsq" style="top:627px" width="8" height="8" viewBox="0 0 8 8" fill="#a29f94"><path d="M0 0h2v1h-1v1h-1zM3 0h2v1h-2zM6 0h2v2h-1v-1h-1zM0 3h1v2h-1zM7 3h1v2h-1zM0 6h1v1h1v1h-2zM3 7h2v1h-2zM6 7h1v-1h1v2h-2z"/></svg>
<span id="t119" class="t nm" style="top:607.4px;line-height:16px;left:342.5px;letter-spacing:0.210px;">Ázsia Expressz 2017.11.24. 720p</span>
<svg style="position:absolute;left:742px;top:616.8px" width="10" height="13" viewBox="0 0 10 13"><path d="M4.600 0c.8 2.200 3.900 3.800 4.400 7.400.4 2.800-1.300 5.200-4.200 5.400C2 12.900.2 10.900.4 8.300.6 6.400 2 5.400 2.300 3.600c.9.900 1.200 1.900 1.100 3C4.700 5.200 5.200 2.300 4.600 0z" fill="#aeaeb1"/><path d="M4.800 12.600c-1.300-.1-2-1.100-1.800-2.300.2-1.100 1.200-1.600 1.500-2.900.9 1.100 2.200 2 2.100 3.500-.1 1-.8 1.700-1.800 1.700z" fill="#222326"/></svg>
<span id="t120" class="t q" style="top:614.8px;line-height:16px;left:760.6px;letter-spacing:-1.325px;">?</span>
<span id="t121" class="t dt" style="top:610.3px;line-height:14px;left:774px;letter-spacing:0.306px;">2017-11-26</span>
<span id="t122" class="t dt" style="top:623px;line-height:14px;left:783px;letter-spacing:0.199px;">10:54:03</span>
<span id="t123" class="t " style="top:615.5px;line-height:14px;left:887.3px;transform:translateX(-50%);">2.27 GB</span>
<span id="t124" class="t " style="top:615.5px;line-height:14px;left:951.3px;transform:translateX(-50%);">+</span>
<span id="t125" class="t w" style="top:615.5px;line-height:14px;left:991.3px;transform:translateX(-50%);">18</span>
<span id="t126" class="t w" style="top:615.5px;line-height:14px;left:1031.3px;transform:translateX(-50%);">38</span>
<span id="t127" class="t gr" style="top:614.8px;line-height:14px;left:1068px;letter-spacing:-0.113px;"><b>Anonymous</b></span>
<div class="hl" style="left:263px;top:643px;width:898px"></div>
<div class="ti sq" style="top:648px;background:linear-gradient(90deg,#3a93e6 0,#3a93e6 2.500px,transparent 2.500px),linear-gradient(135deg,#214b7b 0%,#1a3a60 50%,#142943 100%);box-shadow:inset 0 0 0 1px #234c7a"><span class="l1" style="color:#7db4ea">SD</span><span class="l2" style="color:#cfd6dc">ENG</span><svg style="left:30.500px;top:7.500px" width="18" height="18" viewBox="0 0 18 18"><rect x=".5" y=".5" width="3" height="16" fill="#a4a9ae"/><rect x="12" y=".5" width="3" height="16" fill="#a4a9ae"/><path d="M2 1.500v15M13.500 1.500v15" stroke="#2a4466" stroke-width="1.200" stroke-dasharray="1.300 1.600"/><rect x="3.500" y=".5" width="8.500" height="1.800" fill="#a4a9ae"/><rect x="3.500" y="7.300" width="8.500" height="2" fill="#a4a9ae"/><rect x="3.500" y="14.700" width="8.500" height="1.800" fill="#a4a9ae"/><circle cx="13" cy="14.500" r="4.300" fill="#f2f2f2"/><path d="M9.500 12.800h7.500M8.800 14.800h8.400M9.800 16.800h6.400" stroke="#e0453f" stroke-width="1.100"/><path d="M8.800 13.800a4.300 4.300 0 0 1 4.200-3.600v3.600z" fill="#3a5fc0"/></svg></div>
<div class="plus" style="top:652px"></div>
<svg class="dsq" style="top:669px" width="8" height="8" viewBox="0 0 8 8" fill="#a29f94"><path d="M0 0h2v1h-1v1h-1zM3 0h2v1h-2zM6 0h2v2h-1v-1h-1zM0 3h1v2h-1zM7 3h1v2h-1zM0 6h1v1h1v1h-2zM3 7h2v1h-2zM6 7h1v-1h1v2h-2z"/></svg>
<span id="t128" class="t nm" style="top:649.4px;line-height:16px;left:342.5px;letter-spacing:0.241px;">All.Saints.2017.BDRip.x264-DRONES</span>
<span id="t129" class="t nm" style="top:665px;line-height:16px;left:342.5px;letter-spacing:0.453px;">[imdb: 5.8]</span>
<svg style="position:absolute;left:742px;top:658.8px" width="10" height="13" viewBox="0 0 10 13"><path d="M4.600 0c.8 2.200 3.900 3.800 4.400 7.400.4 2.800-1.300 5.200-4.200 5.400C2 12.900.2 10.900.4 8.300.6 6.400 2 5.400 2.300 3.600c.9.900 1.200 1.900 1.100 3C4.700 5.200 5.200 2.300 4.600 0z" fill="#aeaeb1"/><path d="M4.800 12.600c-1.300-.1-2-1.100-1.800-2.300.2-1.100 1.200-1.600 1.500-2.900.9 1.100 2.200 2 2.100 3.500-.1 1-.8 1.700-1.800 1.700z" fill="#222326"/></svg>
<span id="t130" class="t q" style="top:656.8px;line-height:16px;left:760.6px;letter-spacing:-1.325px;">?</span>
<span id="t131" class="t dt" style="top:652.3px;line-height:14px;left:774px;letter-spacing:0.306px;">2017-11-26</span>
<span id="t132" class="t dt" style="top:665px;line-height:14px;left:783px;letter-spacing:0.199px;">10:53:07</span>
<span id="t133" class="t " style="top:657.5px;line-height:14px;left:887.3px;transform:translateX(-50%);">484.38 MB</span>
<span id="t134" class="t " style="top:657.5px;line-height:14px;left:951.3px;transform:translateX(-50%);">+</span>
<span id="t135" class="t w" style="top:657.5px;line-height:14px;left:991.3px;transform:translateX(-50%);">6</span>
<span id="t136" class="t w" style="top:657.5px;line-height:14px;left:1031.3px;transform:translateX(-50%);">3</span>
<span id="t137" class="t gr" style="top:656.8px;line-height:14px;left:1068px;letter-spacing:-0.113px;"><b>Anonymous</b></span>
<div class="hl" style="left:263px;top:685px;width:898px"></div>
<div class="ti " style="top:690px;background:radial-gradient(ellipse at 50% 50%,#d6c964 0%,#c8b54d 60%,#a98a2a 100%);box-shadow:inset 0 0 0 1px #7e5e16"><span class="l1" style="color:#5a1414">APP</span><span class="l2" style="color:#3a0c0c">RIP</span><svg style="top:9px" width="16" height="16" viewBox="0 0 16 16"><rect x=".5" y="1.500" width="14" height="12" rx="1" fill="#f6f6f8" stroke="#7a3a3a" stroke-width="1"/><rect x="1" y="2" width="13" height="2.200" fill="#7a3a42"/><rect x="2.500" y="6" width="3" height="1.500" fill="#3f7fe0"/><rect x="6.500" y="6" width="6" height="1.500" fill="#c8c8c8"/><rect x="2.500" y="9.500" width="3" height="1.500" fill="#3f7fe0"/><rect x="6.500" y="9.500" width="6" height="1.500" fill="#c8c8c8"/></svg></div>
<div class="plus" style="top:694px"></div>
<svg class="dsq" style="top:711px" width="8" height="8" viewBox="0 0 8 8" fill="#a29f94"><path d="M0 0h2v1h-1v1h-1zM3 0h2v1h-2zM6 0h2v2h-1v-1h-1zM0 3h1v2h-1zM7 3h1v2h-1zM0 6h1v1h1v1h-2zM3 7h2v1h-2zM6 7h1v-1h1v2h-2z"/></svg>
<span id="t138" class="t nm" style="top:691.4px;line-height:16px;left:342.5px;letter-spacing:0.343px;">[MAC]Adobe.Photoshop.Lightroom.Classic.CC.v7.0.1.macOS-...</span>
<svg style="position:absolute;left:742px;top:700.8px" width="10" height="13" viewBox="0 0 10 13"><path d="M4.600 0c.8 2.200 3.900 3.800 4.400 7.400.4 2.800-1.300 5.200-4.200 5.400C2 12.900.2 10.900.4 8.300.6 6.400 2 5.400 2.300 3.600c.9.900 1.200 1.900 1.100 3C4.700 5.200 5.200 2.300 4.600 0z" fill="#aeaeb1"/><path d="M4.800 12.600c-1.300-.1-2-1.100-1.800-2.300.2-1.100 1.200-1.600 1.500-2.900.9 1.100 2.200 2 2.100 3.500-.1 1-.8 1.700-1.800 1.700z" fill="#222326"/></svg>
<span id="t139" class="t q" style="top:698.8px;line-height:16px;left:760.6px;letter-spacing:-1.325px;">?</span>
<span id="t140" class="t dt" style="top:694.3px;line-height:14px;left:774px;letter-spacing:0.306px;">2017-11-26</span>
<span id="t141" class="t dt" style="top:707px;line-height:14px;left:783px;letter-spacing:0.199px;">10:51:43</span>
<span id="t142" class="t " style="top:699.5px;line-height:14px;left:887.3px;transform:translateX(-50%);">1.37 GB</span>
<span id="t143" class="t " style="top:699.5px;line-height:14px;left:951.3px;transform:translateX(-50%);">+</span>
<span id="t144" class="t w" style="top:699.5px;line-height:14px;left:991.3px;transform:translateX(-50%);">2</span>
<span id="t145" class="t w" style="top:699.5px;line-height:14px;left:1031.3px;transform:translateX(-50%);">2</span>
<span id="t146" class="t gr" style="top:698.8px;line-height:14px;left:1068px;letter-spacing:-0.113px;"><b>Anonymous</b></span>
<div class="hl" style="left:263px;top:727px;width:898px"></div>
<div class="ti " style="top:732px;background:radial-gradient(ellipse at 60% 45%,#a5c5c5 0%,#80aeb8 60%,#518eaa 100%);box-shadow:inset 0 0 0 1px #2f6f8c"><span class="l1" style="color:#0b1416">HD</span><span class="l2" style="color:#0b1416">ENG</span><svg style="left:30px;top:7.500px" width="15" height="17" viewBox="0 0 15 17"><rect x="3" y="0.500" width="12" height="16" fill="#30383a"/><path d="M4.200 1v15M13.800 1v15" stroke="#aeb8b8" stroke-width="1" stroke-dasharray="1 1.500"/><rect x="5.500" y="2" width="7" height="6" fill="#4cc23a"/><path d="M8.500 2h4v4z" fill="#f0e040"/><path d="M5.500 6l3-2.500 4 4.500h-7z" fill="#3f9fe0"/><rect x="5.500" y="9" width="7" height="6" fill="#4cc23a"/><path d="M8.500 9h4v4z" fill="#f0e040"/><path d="M5.500 13l3-2.500 4 4.500h-7z" fill="#3f9fe0"/></svg></div>
<div class="plus" style="top:736px"></div>
<svg class="dsq" style="top:753px" width="8" height="8" viewBox="0 0 8 8" fill="#a29f94"><path d="M0 0h2v1h-1v1h-1zM3 0h2v1h-2zM6 0h2v2h-1v-1h-1zM0 3h1v2h-1zM7 3h1v2h-1zM0 6h1v1h1v1h-2zM3 7h2v1h-2zM6 7h1v-1h1v2h-2z"/></svg>
<span id="t147" class="t nm" style="top:733.4px;line-height:16px;left:342.5px;letter-spacing:0.208px;">Trust.The.Process.2017.720p.WEB.H264-13</span>
<svg style="position:absolute;left:742px;top:742.8px" width="10" height="13" viewBox="0 0 10 13"><path d="M4.600 0c.8 2.200 3.900 3.800 4.400 7.400.4 2.800-1.300 5.200-4.200 5.400C2 12.900.2 10.900.4 8.300.6 6.400 2 5.400 2.300 3.600c.9.900 1.200 1.900 1.100 3C4.700 5.200 5.200 2.300 4.600 0z" fill="#aeaeb1"/><path d="M4.800 12.600c-1.300-.1-2-1.100-1.800-2.300.2-1.100 1.200-1.600 1.500-2.900.9 1.100 2.200 2 2.100 3.500-.1 1-.8 1.700-1.800 1.700z" fill="#222326"/></svg>
<span id="t148" class="t q" style="top:740.8px;line-height:16px;left:760.6px;letter-spacing:-1.325px;">?</span>
<span id="t149" class="t dt" style="top:736.3px;line-height:14px;left:774px;letter-spacing:0.306px;">2017-11-26</span>
<span id="t150" class="t dt" style="top:749px;line-height:14px;left:783px;letter-spacing:0.199px;">10:50:14</span>
<span id="t151" class="t " style="top:741.5px;line-height:14px;left:887.3px;transform:translateX(-50%);">1.69 GB</span>
<span id="t152" class="t " style="top:741.5px;line-height:14px;left:951.3px;transform:translateX(-50%);">0</span>
<span id="t153" class="t w" style="top:741.5px;line-height:14px;left:991.3px;transform:translateX(-50%);">1</span>
<span id="t154" class="t w" style="top:741.5px;line-height:14px;left:1031.3px;transform:translateX(-50%);">2</span>
<span id="t155" class="t gr" style="top:740.8px;line-height:14px;left:1068px;letter-spacing:-0.113px;"><b>Anonymous</b></span>
<div class="hl" style="left:263px;top:769px;width:898px"></div>
<div class="ti " style="top:774px;background:radial-gradient(ellipse at 50% 50%,#c8c8c8 0%,#aeaeae 60%,#8a8a8a 100%);box-shadow:inset 0 0 0 1px #6f6f6f"><span class="l1" style="color:#101010"><i style="letter-spacing:.3px;font-style:normal">BOOK</i></span><span class="l2" style="color:#101010">ENG</span><svg style="left:32.500px;top:7.500px" width="15" height="17" viewBox="0 0 15 17"><path d="M2.500 1h10.500v14.500h-10a1.500 1.500 0 0 1-1.500-1.500v-11.500a1.500 1.500 0 0 1 1-1.500z" fill="#4a3630" stroke="#2e201c" stroke-width="1"/><rect x="3.500" y="4" width="8.500" height="10.500" fill="#8a8482"/><rect x="3.500" y="4" width="8.500" height="10.500" fill="url(#bk)"/><rect x="5" y="6" width="4" height="1" fill="#e8e8e8"/></svg></div>
<div class="plus" style="top:778px"></div>
<svg class="dsq" style="top:795px" width="8" height="8" viewBox="0 0 8 8" fill="#a29f94"><path d="M0 0h2v1h-1v1h-1zM3 0h2v1h-2zM6 0h2v2h-1v-1h-1zM0 3h1v2h-1zM7 3h1v2h-1zM0 6h1v1h1v1h-2zM3 7h2v1h-2zM6 7h1v-1h1v2h-2z"/></svg>
<span id="t156" class="t nm" style="top:775.4px;line-height:16px;left:342.5px;letter-spacing:0.247px;">Brandon Sanderson - Oathbringer</span>
<svg style="position:absolute;left:742px;top:784.8px" width="10" height="13" viewBox="0 0 10 13"><path d="M4.600 0c.8 2.200 3.900 3.800 4.400 7.400.4 2.800-1.300 5.200-4.200 5.400C2 12.900.2 10.900.4 8.300.6 6.400 2 5.400 2.300 3.600c.9.900 1.200 1.900 1.100 3C4.700 5.200 5.200 2.300 4.600 0z" fill="#aeaeb1"/><path d="M4.800 12.600c-1.300-.1-2-1.100-1.800-2.300.2-1.100 1.200-1.600 1.500-2.900.9 1.100 2.200 2 2.100 3.500-.1 1-.8 1.700-1.800 1.700z" fill="#222326"/></svg>
<span id="t157" class="t q" style="top:782.8px;line-height:16px;left:760.6px;letter-spacing:-1.325px;">?</span>
<span id="t158" class="t dt" style="top:778.3px;line-height:14px;left:774px;letter-spacing:0.306px;">2017-11-26</span>
<span id="t159" class="t dt" style="top:791px;line-height:14px;left:783px;letter-spacing:0.199px;">10:46:58</span>
<span id="t160" class="t " style="top:783.5px;line-height:14px;left:887.3px;transform:translateX(-50%);">32.17 MB</span>
<span id="t161" class="t " style="top:783.5px;line-height:14px;left:951.3px;transform:translateX(-50%);">0</span>
<span id="t162" class="t w" style="top:783.5px;line-height:14px;left:991.3px;transform:translateX(-50%);">0</span>
<span id="t163" class="t w" style="top:783.5px;line-height:14px;left:1031.3px;transform:translateX(-50%);">3</span>
<span id="t164" class="t gr" style="top:782.8px;line-height:14px;left:1068px;letter-spacing:-0.113px;"><b>Anonymous</b></span>
<div id="scroll"></div>
</body>
</html>
